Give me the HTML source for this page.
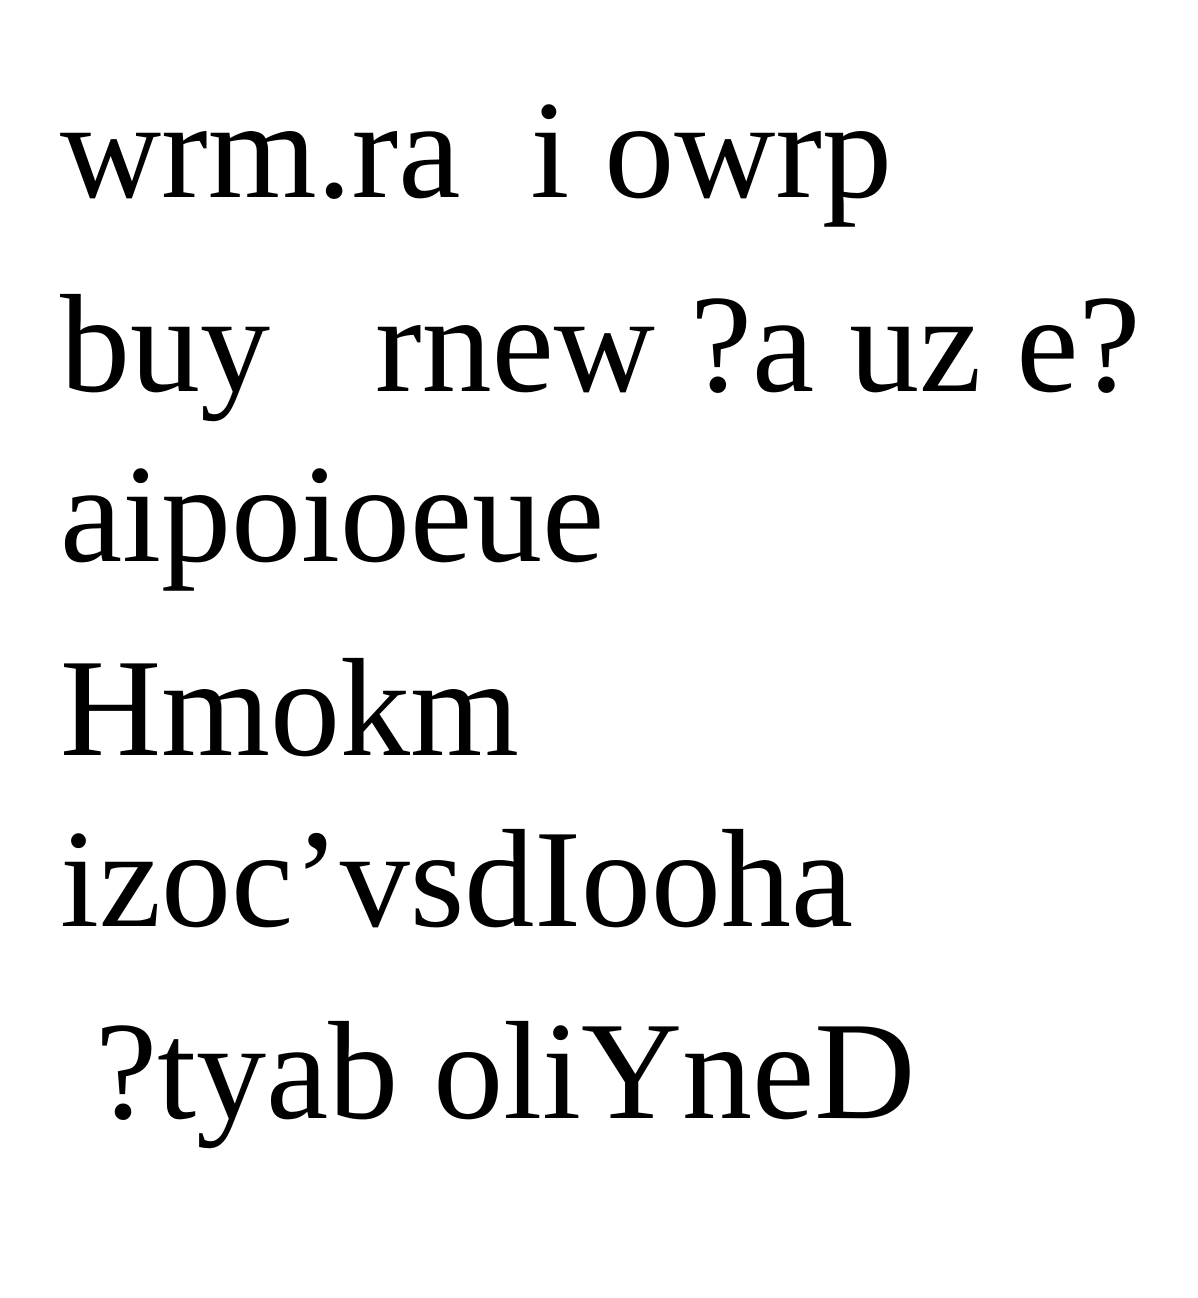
<!DOCTYPE html>
<html><head><meta charset="utf-8"><style>
html,body{margin:0;padding:0;background:#fff;width:1198px;height:1298px;overflow:hidden}
div{position:absolute;left:60px;font-family:"Liberation Serif",serif;font-size:140px;line-height:1;white-space:pre;color:#000}
</style></head><body>
<div style="top:81px">wrm.ra  i owrp</div>
<div style="top:275px">buy   rnew ?a uz e?</div>
<div style="top:445px">aipoioeue</div>
<div style="top:639px">Hmokm</div>
<div style="top:810px">izoc’vsdIooha</div>
<div style="top:1002px"> ?tyab oliYneD</div>
</body></html>
